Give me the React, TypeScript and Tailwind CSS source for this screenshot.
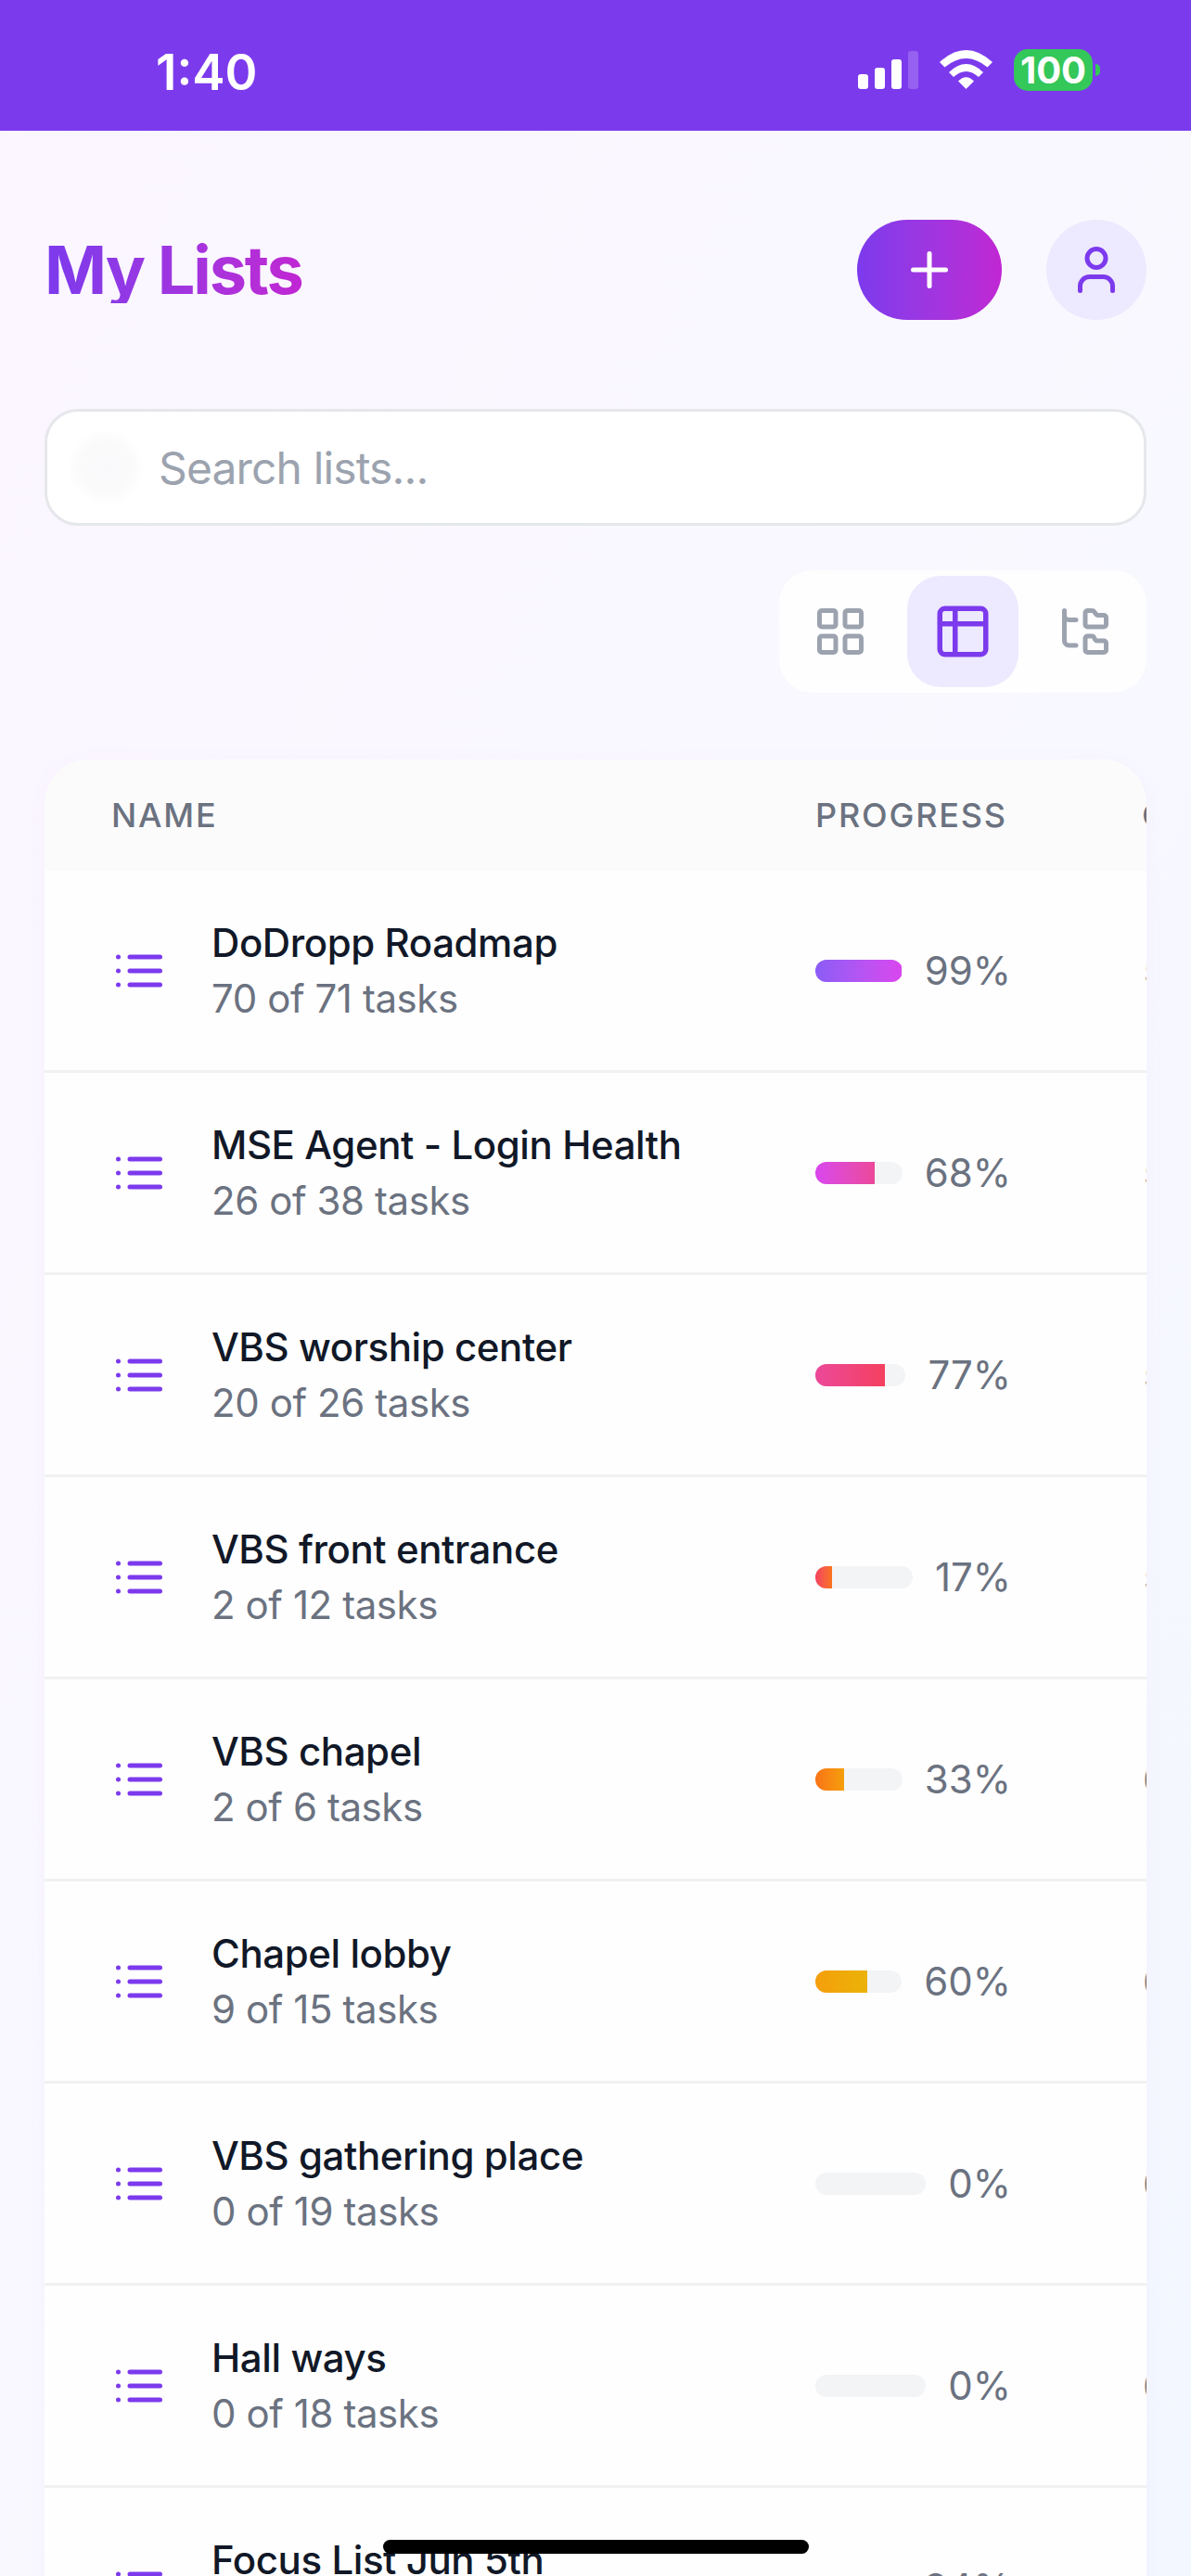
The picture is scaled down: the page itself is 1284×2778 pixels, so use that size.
import { LayoutGrid, Table2, FolderTree, Plus, User } from 'lucide-react';

const lists = [
  { name: 'DoDropp Roadmap', done: 70, total: 71, pct: 99, fill: 'from-[#8b5cf6] to-[#d946ef]', next: '5' },
  { name: 'MSE Agent - Login Health', done: 26, total: 38, pct: 68, fill: 'from-[#d946ef] to-[#ec4899]', next: '5' },
  { name: 'VBS worship center', done: 20, total: 26, pct: 77, fill: 'from-[#ec4899] to-[#f43f5e]', next: '5' },
  { name: 'VBS front entrance', done: 2, total: 12, pct: 17, fill: 'from-[#f43f5e] to-[#f97316]', next: '5' },
  { name: 'VBS chapel', done: 2, total: 6, pct: 33, fill: 'from-[#f97316] to-[#f59e0b]', next: '6' },
  { name: 'Chapel lobby', done: 9, total: 15, pct: 60, fill: 'from-[#f59e0b] to-[#eab308]', next: '6' },
  { name: 'VBS gathering place', done: 0, total: 19, pct: 0, fill: 'from-[#eab308] to-[#84cc16]', next: '6' },
  { name: 'Hall ways', done: 0, total: 18, pct: 0, fill: 'from-[#84cc16] to-[#22c55e]', next: '6' },
  { name: 'Focus List Jun 5th', done: 12, total: 35, pct: 34, fill: 'from-[#22c55e] to-[#10b981]', next: '6' },
];

function StatusBar() {
  return (
    <div className="h-[141px] bg-[#7c3aed] flex justify-between pl-[168px] pr-[98px] pt-[53px] text-white">
      <span className="text-[53px] leading-[47px] font-semibold mt-[2px]">1:40</span>
      <div className="flex items-start">
        <div className="flex items-end gap-[7px] h-[41px] mt-[2px]">
          <div className="w-[11px] h-[16px] rounded-[3px] bg-white" />
          <div className="w-[11px] h-[23px] rounded-[3px] bg-white" />
          <div className="w-[11px] h-[32px] rounded-[3px] bg-white" />
          <div className="w-[11px] h-[41px] rounded-[3px] bg-white/20" />
        </div>
        <svg width="57" height="42" viewBox="0 0 57 42" fill="white" className="ml-[23px] mt-px">
          <path d="M0 13Q28.5 -13 57 13L51.5 18.5Q28.5 -0.5 5.5 18.5Z" />
          <path d="M10 24Q28.5 6 47 24L42 29Q28.5 17 15 29Z" />
          <path d="M20 33.5Q28.5 25 37 33.5L28.5 42Z" />
        </svg>
        <div className="ml-[23px] w-[85px] h-[45px] rounded-[15px] bg-[#34c759] flex items-center justify-center text-[40px] leading-none font-bold">
          100
        </div>
        <div className="ml-[3px] mt-[16px] w-[5px] h-[13px] rounded-r-full bg-[#34c759]" />
      </div>
    </div>
  );
}

function ListIcon() {
  return (
    <svg width="60" height="60" viewBox="0 0 24 24" fill="none" stroke="#7c3aed" strokeWidth="2" strokeLinecap="round" className="shrink-0">
      <path d="M3 6h.01M3 12h.01M3 18h.01M8 6h13M8 12h13M8 18h13" />
    </svg>
  );
}

export default function App() {
  return (
    <div className="relative h-[2778px] overflow-hidden font-['Inter',sans-serif] bg-[#f8f8ff]">
      <StatusBar />

      <div className="h-[2637px] px-[48px] pt-[96px] bg-gradient-to-br from-[#fbf6ff] via-[#f9f8ff] to-[#f3f7ff]">
        <div className="flex items-center justify-between h-[108px]">
          <h1 className="text-[72px] leading-none font-bold tracking-[-0.03em] bg-gradient-to-r from-[#7c3aed] to-[#c026d3] bg-clip-text text-transparent">
            My Lists
          </h1>
          <div className="flex gap-[48px]">
            <button className="w-[156px] h-[108px] rounded-full flex items-center justify-center text-white bg-gradient-to-r from-[#7c3aed] to-[#c026d3]">
              <Plus size={60} strokeWidth={2} />
            </button>
            <button className="w-[108px] h-[108px] rounded-full flex items-center justify-center text-[#7c3aed] bg-[#ede9fe]">
              <User size={60} strokeWidth={2} />
            </button>
          </div>
        </div>

        <div className="mt-[96px] h-[126px] border-[3px] border-[#e5e7eb] rounded-[36px] bg-white flex items-center pl-[21px]">
          <div className="w-[84px] h-[84px] shrink-0 rounded-full bg-[radial-gradient(circle,#f9f9fb_0%,#fafafb_45%,#ffffff_70%)]" />
          <input
            placeholder="Search lists..."
            className="ml-[15px] mt-[2px] flex-1 bg-transparent outline-none text-[48px] tracking-[-0.018em] placeholder:text-[#9ca3af]"
          />
        </div>

        <div className="mt-[48px] flex justify-end">
          <div className="flex gap-[12px] p-[6px] rounded-[36px] bg-white/90">
            <button className="w-[120px] h-[120px] flex items-center justify-center text-[#9ca3af]">
              <LayoutGrid size={60} strokeWidth={2} />
            </button>
            <button className="w-[120px] h-[120px] rounded-[36px] flex items-center justify-center text-[#7c3aed] bg-[#ede9fe]">
              <Table2 size={66} strokeWidth={2} />
            </button>
            <button className="w-[120px] h-[120px] flex items-center justify-center text-[#9ca3af]">
              <FolderTree size={60} strokeWidth={2} />
            </button>
          </div>
        </div>

        <div className="mt-[72px] rounded-t-[48px] overflow-hidden bg-white/90 shadow-[0_3px_24px_rgba(124,58,237,0.03)]">
          <div className="h-[120px] bg-[#fbfbfc] grid grid-cols-[759px_352px_1fr] items-center text-[36px] font-medium tracking-[0.05em] text-[#6b7280] whitespace-nowrap">
            <span className="pl-[72px]">NAME</span>
            <span className="pl-[72px]">PROGRESS</span>
            <span className="pl-[72px]">C</span>
          </div>
          {lists.map((list) => (
            <div key={list.name} className="h-[218px] border-b-[3px] border-[#f0f1f3] grid grid-cols-[759px_352px_1fr] items-center">
              <div className="flex items-center gap-[48px] pl-[72px]">
                <ListIcon />
                <div className="text-[42px] leading-[60px] tracking-[-0.01em]">
                  <div className="font-medium text-[#111827]">{list.name}</div>
                  <div className="text-[#6b7280]">
                    {list.done} of {list.total} tasks
                  </div>
                </div>
              </div>
              <div className="flex items-center gap-[24px] pl-[72px] pr-[69px]">
                <div className="flex-1 h-[24px] rounded-full bg-[#f3f4f6] overflow-hidden">
                  <div className={`h-full bg-gradient-to-r ${list.fill}`} style={{ width: `${list.pct}%` }} />
                </div>
                <span className="text-[42px] leading-[60px] text-[#6b7280]">{list.pct}%</span>
              </div>
              <span className="pl-[73px] text-[42px] leading-[60px] text-[#6b7280]">{list.next}</span>
            </div>
          ))}
        </div>
      </div>

      <div className="absolute left-[413px] bottom-[24px] w-[459px] h-[15px] rounded-full bg-black" />
    </div>
  );
}
